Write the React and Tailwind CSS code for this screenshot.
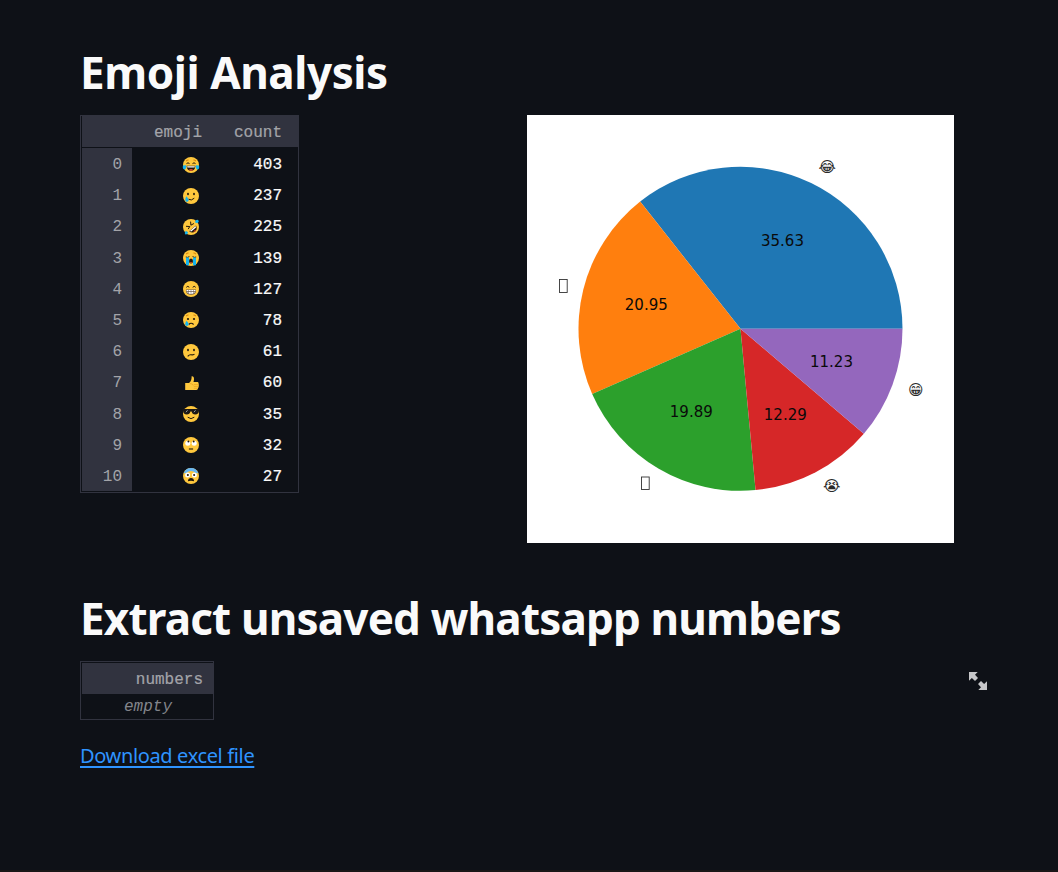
import React from "react";

const Y = "#ffc83d";
const INK = "#20170c";
const TEAR = "#15b4ee";

function Face({ children }) {
  return (
    <>
      <circle cx="8" cy="8" r="8" fill={Y} />
      {children}
    </>
  );
}

const brows = <path d="M3 4.2q.8-1.3 2.5-1.2M13 4.2q-.8-1.3-2.5-1.2" stroke="#d67d00" fill="none" strokeWidth="1" />;

const GLYPHS = {
  joy: (
    <Face>
      {brows}
      <path d="M3.5 6.6q1.5-1.6 3 0M9.5 6.6q1.5-1.6 3 0" stroke={INK} fill="none" strokeWidth="1" />
      <path d="M3.6 8.8h8.8q-.2 5-4.4 5t-4.4-5z" fill={INK} />
      <path d="M4.1 9.2h7.8l-.3 1.4H4.4z" fill="#fff" />
      <path d="M5.6 12.9q2.4-2 4.8 0-2.4 1.6-4.8 0z" fill="#e8452c" />
      <path d="M0 8.5l3.2-.3Q3.4 12.500 1.3 12.500-.8 12 0 8.500zM16 8.500l-3.200-.3q-.2 4.300 1.900 4.300 2.100-.5 1.300-4z" fill={TEAR} />
    </Face>
  ),
  smileTear: (
    <Face>
      <ellipse cx="5" cy="6" rx=".9" ry="1.300" fill={INK} />
      <ellipse cx="11" cy="6" rx=".9" ry="1.300" fill={INK} />
      <path d="M5.500 11.200q2.800 2 5.800-1" stroke={INK} fill="none" strokeWidth="1" />
      <path d="M3.400 8.200q3.200 3.500 1.800 5-1.400 1-2.500 0-1.200-1.400.7-5z" fill={TEAR} />
    </Face>
  ),
  rofl: (
    <Face>
      <path d="M3 7.300l3.800.2-1.600 2.600M7.600 2.600l.3 3.600 3-1.700" stroke={INK} fill="none" strokeWidth="1" />
      <path d="M6.200 12.200L13 6.600q1.800 3.600-.8 6-3 2-6-.4z" fill={INK} />
      <path d="M6.800 12l5.900-4.900.3 1.300-4.700 4.200z" fill="#fff" />
      <path d="M10.300 13q.8-2.300 2.800-2-.6 1.800-2.800 2z" fill="#e8452c" />
      <path d="M2.800 11.800l2.300 1.400q-.7 2.600-2.600 2.200-1.500-1.400.3-3.600zM11.800 3.200q1-2.800 3.200-2.300 1.800 1.300-.6 3.300z" fill={TEAR} />
    </Face>
  ),
  sob: (
    <Face>
      {brows}
      <path d="M2.800 7q1.800 1 3.600-.4M13.200 7q-1.800 1-3.600-.4" stroke={INK} fill="none" strokeWidth="1" />
      <path d="M3 7.600h3v7.700H3zM10 7.600h3v7.700h-3z" fill={TEAR} />
      <ellipse cx="8" cy="11" rx="2" ry="2.600" fill={INK} />
      <path d="M6.600 12.400q1.400-1 2.800 0-1.400 1.400-2.800 0z" fill="#e8452c" />
    </Face>
  ),
  grin: (
    <Face>
      <path d="M3.300 6.300q1.500-2 3 0M9.700 6.300q1.500-2 3 0" stroke={INK} fill="none" strokeWidth="1" />
      <path d="M3 8.400h10q.4 5.300-5 5.300t-5-5.300z" fill="#6b5b4d" />
      <path d="M3.500 8.900h9l-.1 1.400H3.600zM4 11h8q-.8 2-4 2.100T4 11z" fill="#fff" />
      <path d="M5.500 9v4M8 9v4M10.500 9v4" stroke="#6b5b4d" strokeWidth=".5" />
    </Face>
  ),
  cry: (
    <Face>
      {brows}
      <circle cx="5" cy="7" r="1.100" fill={INK} />
      <circle cx="11" cy="7" r="1.100" fill={INK} />
      <path d="M5.800 12.500Q8 10 10.600 12.500" stroke={INK} fill="none" strokeWidth="1.200" />
      <path d="M3.500 8.800q3.200 3.200 1.700 4.800-1.300.9-2.500 0-1.300-1.500.8-4.800z" fill={TEAR} />
    </Face>
  ),
  confused: (
    <Face>
      <ellipse cx="5" cy="6" rx=".9" ry="1.300" fill={INK} />
      <ellipse cx="11" cy="6" rx=".9" ry="1.300" fill={INK} />
      <path d="M4.700 12.300q1.700-1.900 3.400-1.500t3.400-.7" stroke={INK} fill="none" strokeWidth="1.100" />
    </Face>
  ),
  thumb: (
    <>
      <path d="M2.200 8h3.800Q9 5.500 8.600 1.200q1.900-.4 2.300 1.500.4 1.800-.4 4.300h4.300q1.500.8.700 2 .9 1 .1 2 .5 1.200-.5 2 .2 1.700-1.600 2H2.200z" fill={Y} />
      <path d="M10.800 9.500h4.500M10.800 11.400h4.500M10.800 13.300h4M7 8.500q3 .2 3.200 2" stroke="#e59a17" strokeWidth=".6" fill="none" />
    </>
  ),
  cool: (
    <Face>
      <path d="M-.6 3.100h17.200v1.500H16q-.3 4-3.800 4-3 0-3.600-3H7.400q-.6 3-3.600 3-3.500 0-3.800-4h-.6z" fill="#1b1816" />
      <path d="M3 6.200l1.500-1.900M11 6.200l1.500-1.900" stroke="#b9c1c6" strokeWidth=".8" />
      <path d="M4.700 11.200q3.300 2.900 6.600 0" stroke={INK} fill="none" strokeWidth="1" />
    </Face>
  ),
  roll: (
    <Face>
      <circle cx="4.800" cy="6.200" r="2.500" fill="#fff" />
      <circle cx="11.200" cy="6.200" r="2.500" fill="#fff" />
      <circle cx="5.400" cy="4.500" r=".95" fill={INK} />
      <circle cx="10.700" cy="4.500" r=".95" fill={INK} />
      <path d="M5.900 12h4.200" stroke={INK} strokeWidth="1.100" />
    </Face>
  ),
  fear: (
    <Face>
      <path d="M.7 5.200Q2.600 0 8 0t7.300 5.200q-3.300.2-4.800-1.600-2.500-1.200-5 0Q4 5.400.7 5.200z" fill="#67b7f3" />
      <circle cx="4.600" cy="7" r="2.500" fill="#fff" />
      <circle cx="11.400" cy="7" r="2.500" fill="#fff" />
      <circle cx="4.900" cy="7" r="1" fill={INK} />
      <circle cx="11.100" cy="7" r="1" fill={INK} />
      <path d="M4.900 13.300q.3-3.300 3.100-3.300t3.100 3.300q-3.100-1-6.200 0z" fill={INK} />
    </Face>
  ),
};

const ROWS = [
  ["joy", 403],
  ["smileTear", 237],
  ["rofl", 225],
  ["sob", 139],
  ["grin", 127],
  ["cry", 78],
  ["confused", 61],
  ["thumb", 60],
  ["cool", 35],
  ["roll", 32],
  ["fear", 27],
];

function EmojiTable() {
  return (
    <div className="h-[378px] w-[219px] border border-[#31333f] pl-px font-['Liberation_Mono',monospace] text-[16px]">
      <div className="grid h-[32px] grid-cols-[50px_86px_80px] items-center border-b border-[#0e1117] bg-[#31333f] pt-[2px] text-right text-[#a3a4a9] [-webkit-text-stroke:0.2px_#a3a4a9]">
        <span />
        <span className="pr-4">emoji</span>
        <span className="pr-4">count</span>
      </div>
      <div className="grid h-[343px] grid-rows-11">
        {ROWS.map(([name, count], i) => (
          <div key={name} className="grid grid-cols-[50px_86px_80px] items-stretch text-right">
            <span className="flex items-center justify-end bg-[#31333f] pr-[10px] pt-[3px] text-[#a3a4a9]">{i}</span>
            <span className="flex items-center justify-end pr-[19px] pt-[2px]">
              <svg viewBox="0 0 16 16" className="size-4 overflow-visible" aria-label={name}>
                {GLYPHS[name]}
              </svg>
            </span>
            <span className="flex items-center justify-end pr-4 pt-[3px] text-[#fafafa] [-webkit-text-stroke:0.2px_#fafafa]">{count}</span>
          </div>
        ))}
      </div>
    </div>
  );
}

const CX = 213.5;
const CY = 213.8;
const R = 162;
const SLICES = [
  [403, "#1f77b4"],
  [237, "#ff7f0e"],
  [225, "#2ca02c"],
  [139, "#d62728"],
  [127, "#9467bd"],
];
const TOTAL = 1131;

function wedges() {
  let start = 0;
  return SLICES.map(([n, color]) => {
    const end = start + (n / TOTAL) * Math.PI * 2;
    const d = `M${CX} ${CY}L${CX + R * Math.cos(start)} ${CY - R * Math.sin(start)}A${R} ${R} 0 0 0 ${CX + R * Math.cos(end)} ${CY - R * Math.sin(end)}Z`;
    start = end;
    return <path key={color} d={d} fill={color} />;
  });
}

function PieChart() {
  return (
    <svg viewBox="0 0 427 428" className="h-[428px] w-[427px] bg-white">
      {wedges()}
      <g className="font-['DejaVu_Sans',sans-serif] text-[15px]" textAnchor="middle" fill="#0a0a0a">
        <text x="255.500" y="131">35.63</text>
        <text x="119.300" y="195">20.95</text>
        <text x="164.300" y="302">19.89</text>
        <text x="258.300" y="305">12.29</text>
        <text x="304.500" y="252.300">11.23</text>
        <g fill="#2a2a2a">
          <text x="300.300" y="57">😂</text>
          <text x="304.800" y="376">😭</text>
          <text x="388.800" y="280">😁</text>
        </g>
      </g>
      <g fill="none" stroke="#333" strokeWidth=".9">
        <rect x="32.500" y="164.500" width="7.700" height="13" />
        <rect x="114.500" y="362" width="7.700" height="12.500" />
      </g>
    </svg>
  );
}

export default function App() {
  return (
    <main className="flex h-[872px] w-[1058px] flex-col overflow-hidden border-b-2 border-[#191617] bg-[#0e1117] pl-20 pr-[71px] font-['Noto_Sans',sans-serif]">
      <h1 className="mt-[42px] h-[73px] whitespace-nowrap text-[44px] font-bold leading-[60px] text-[#fafafa]">
        <span className="inline-block tracking-[-0.43px]">Emoji Analysis</span>
      </h1>
      <section className="flex h-[428px] items-start justify-between pr-[33px]">
        <EmojiTable />
        <PieChart />
      </section>
      <h1 className="mt-[45px] h-[73px] whitespace-nowrap text-[44px] font-bold leading-[60px] text-[#fafafa]">
        <span className="inline-block tracking-[-0.82px]">Extract unsaved whatsapp numbers</span>
      </h1>
      <section className="flex items-start justify-between">
        <div className="h-[59px] w-[134px] border border-[#31333f] pl-px pt-px font-['Liberation_Mono',monospace] text-[16px]">
          <div className="flex h-[31px] items-center justify-end bg-[#31333f] pr-[10px] pt-[3px] text-[#a3a4a9] [-webkit-text-stroke:0.2px_#a3a4a9]">numbers</div>
          <div className="pl-px pt-px text-center italic leading-[24px] text-[#83858b]">empty</div>
        </div>
        <svg viewBox="0 0 18 18" className="mt-[11px] h-[18px] w-[18px]" fill="#c6c7c9">
          <path d="M0 0h8.700L6 2.800 9 6 6 9 2.900 5.900 0 8.700zM18 18H9.300l2.700-2.800L9 12l3-3 3.100 3.100L18 9.300z" />
        </svg>
      </section>
      <div className="mt-[21px] leading-[30px]">
        <a className="text-[20px] tracking-[-0.36px] text-[#2f94ff] underline decoration-[1.500px] underline-offset-[3px]" href="#">Download excel file</a>
      </div>
    </main>
  );
}
